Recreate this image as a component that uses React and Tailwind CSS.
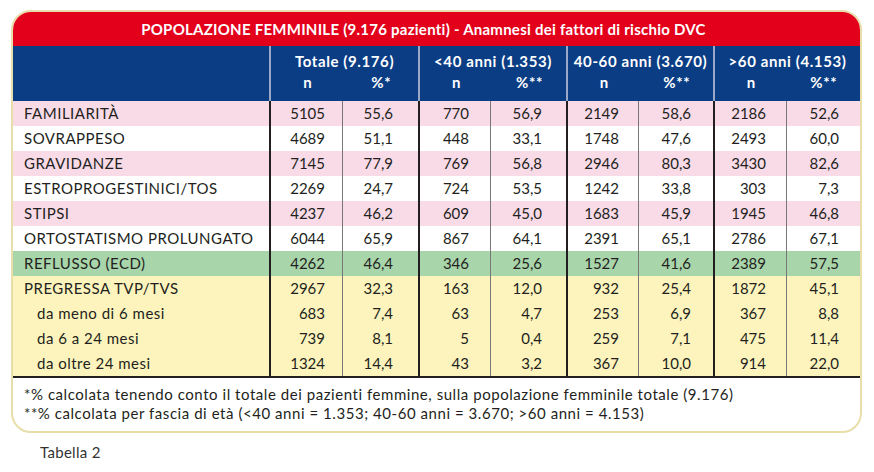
const rows = [
  { label: "FAMILIARITÀ", bg: "bg-[#f9dbe8]", v: ["5105", "55,6", "770", "56,9", "2149", "58,6", "2186", "52,6"] },
  { label: "SOVRAPPESO", bg: "bg-white", v: ["4689", "51,1", "448", "33,1", "1748", "47,6", "2493", "60,0"] },
  { label: "GRAVIDANZE", bg: "bg-[#f9dbe8]", v: ["7145", "77,9", "769", "56,8", "2946", "80,3", "3430", "82,6"] },
  { label: "ESTROPROGESTINICI/TOS", bg: "bg-white", v: ["2269", "24,7", "724", "53,5", "1242", "33,8", "303", "7,3"] },
  { label: "STIPSI", bg: "bg-[#f9dbe8]", v: ["4237", "46,2", "609", "45,0", "1683", "45,9", "1945", "46,8"] },
  { label: "ORTOSTATISMO PROLUNGATO", bg: "bg-white", v: ["6044", "65,9", "867", "64,1", "2391", "65,1", "2786", "67,1"] },
  { label: "REFLUSSO (ECD)", bg: "bg-[#a9d5ab]", v: ["4262", "46,4", "346", "25,6", "1527", "41,6", "2389", "57,5"] },
  { label: "PREGRESSA TVP/TVS", bg: "bg-[#fdf4bd]", v: ["2967", "32,3", "163", "12,0", "932", "25,4", "1872", "45,1"] },
  { label: "da meno di 6 mesi", sub: true, bg: "bg-[#fdf4bd]", v: ["683", "7,4", "63", "4,7", "253", "6,9", "367", "8,8"] },
  { label: "da 6 a 24 mesi", sub: true, bg: "bg-[#fdf4bd]", v: ["739", "8,1", "5", "0,4", "259", "7,1", "475", "11,4"] },
  { label: "da oltre 24 mesi", sub: true, bg: "bg-[#fdf4bd]", v: ["1324", "14,4", "43", "3,2", "367", "10,0", "914", "22,0"] },
];

const groups = [
  { title: "Totale (9.176)", pct: "%*" },
  { title: "<40 anni (1.353)", pct: "%**" },
  { title: "40-60 anni (3.670)", pct: "%**" },
  { title: ">60 anni (4.153)", pct: "%**" },
];

// right padding per column, measured off the print
const pads = ["pr-[17px]", "pr-[25px]", "pr-[21px]", "pr-[24px]", "pr-[19px]", "pr-[22px]", "pr-[20px]", "pr-[21px]"];

const cols = "grid grid-cols-[256px_73px_76px_72px_76px_72px_75px_73px_74px]";

export default function App() {
  return (
    <div className="w-[874px] h-[472px] bg-white text-[#231f20] font-['Lato',sans-serif]">
      <div className="pt-[10px] pl-[11px]">
        <div className="w-[851px] border-2 border-[#e7dea9] rounded-[20px] overflow-hidden">
          <div className="h-[34px] bg-[#e3001b] text-white font-bold text-[15px] tracking-[0.25px] flex items-center justify-center pr-[26px]">
            POPOLAZIONE FEMMINILE (9.176 pazienti) - Anamnesi dei fattori di rischio DVC
          </div>

          <div className="h-[55px] bg-[#0a3d84] text-white font-bold text-[15px] tracking-[0.6px] grid grid-cols-[256px_149px_148px_147px_147px]">
            <div />
            {groups.map((g) => (
              <div key={g.title} className="border-l-2 border-[#9aa8c8] flex flex-col pt-[5px]">
                <div className="text-center leading-[21px]">{g.title}</div>
                <div className="flex leading-[21px]">
                  <span className="flex-1 text-center">n</span>
                  <span className="flex-1 text-center">{g.pct}</span>
                </div>
              </div>
            ))}
          </div>

          <div className="border-b-2 border-[#231f20]">
            {rows.map((r) => (
              <div key={r.label} className={`${cols} ${r.bg} h-[25px] text-[15px] leading-[25px]`}>
                <div className={`tracking-[0.5px] ${r.sub ? "pl-[24px]" : "pl-[11px]"}`}>{r.label}</div>
                {r.v.map((x, i) => (
                  <div
                    key={i}
                    className={`text-right ${pads[i]} ${i % 2 === 0 ? "border-l-2 border-[#231f20]" : "border-l border-[#777]"}`}
                  >
                    {x}
                  </div>
                ))}
              </div>
            ))}
          </div>

          <div className="h-[53px] pl-[11px] pt-[7px] text-[15px] tracking-[0.55px] leading-[19px]">
            <p>*% calcolata tenendo conto il totale dei pazienti femmine, sulla popolazione femminile totale (9.176)</p>
            <p>**% calcolata per fascia di età (&lt;40 anni = 1.353; 40-60 anni = 3.670; &gt;60 anni = 4.153)</p>
          </div>
        </div>
        <div className="pl-[29px] pt-[8px] text-[15px] tracking-[0.3px] text-[#333]">Tabella 2</div>
      </div>
    </div>
  );
}
